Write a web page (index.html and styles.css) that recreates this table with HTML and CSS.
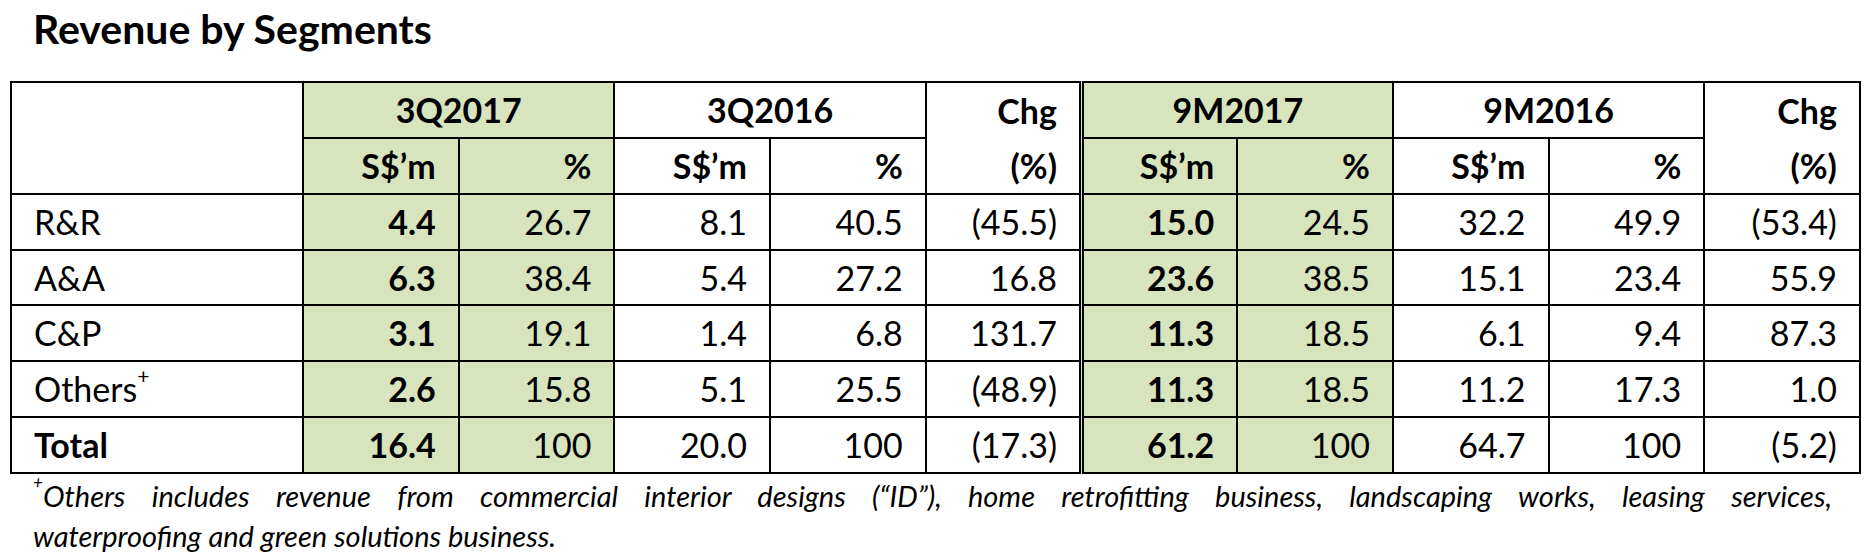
FILE: index.html
```html
<!DOCTYPE html>
<html lang="en">
<head>
<meta charset="utf-8">
<title>Revenue by Segments</title>
<link rel="stylesheet" href="styles.css">
</head>
<body>
<div class="page">
  <h1 class="title">Revenue by Segments</h1>
  <table class="rev">
    <colgroup>
      <col class="c-label">
      <col class="c-num"><col class="c-num"><col class="c-num"><col class="c-num"><col class="c-num">
      <col class="c-num"><col class="c-num"><col class="c-num"><col class="c-num"><col class="c-num">
    </colgroup>
    <thead>
      <tr class="hrow">
        <th rowspan="2" class="blank"></th>
        <th colspan="2" class="grp hl">3Q2017</th>
        <th colspan="2" class="grp">3Q2016</th>
        <th rowspan="2" class="chg"><span class="chg-line">Chg</span><span class="chg-line">(%)</span></th>
        <th colspan="2" class="grp hl dbl">9M2017</th>
        <th colspan="2" class="grp">9M2016</th>
        <th rowspan="2" class="chg"><span class="chg-line">Chg</span><span class="chg-line">(%)</span></th>
      </tr>
      <tr class="hrow">
        <th class="hl">S$’m</th><th class="hl">%</th>
        <th>S$’m</th><th>%</th>
        <th class="hl dbl">S$’m</th><th class="hl">%</th>
        <th>S$’m</th><th>%</th>
      </tr>
    </thead>
    <tbody>
      <tr>
        <td class="lbl">R&amp;R</td>
        <td class="hl b">4.4</td><td class="hl">26.7</td>
        <td>8.1</td><td>40.5</td><td>(45.5)</td>
        <td class="hl b dbl">15.0</td><td class="hl">24.5</td>
        <td>32.2</td><td>49.9</td><td>(53.4)</td>
      </tr>
      <tr>
        <td class="lbl">A&amp;A</td>
        <td class="hl b">6.3</td><td class="hl">38.4</td>
        <td>5.4</td><td>27.2</td><td>16.8</td>
        <td class="hl b dbl">23.6</td><td class="hl">38.5</td>
        <td>15.1</td><td>23.4</td><td>55.9</td>
      </tr>
      <tr>
        <td class="lbl">C&amp;P</td>
        <td class="hl b">3.1</td><td class="hl">19.1</td>
        <td>1.4</td><td>6.8</td><td>131.7</td>
        <td class="hl b dbl">11.3</td><td class="hl">18.5</td>
        <td>6.1</td><td>9.4</td><td>87.3</td>
      </tr>
      <tr>
        <td class="lbl">Others<sup class="plus">+</sup></td>
        <td class="hl b">2.6</td><td class="hl">15.8</td>
        <td>5.1</td><td>25.5</td><td>(48.9)</td>
        <td class="hl b dbl">11.3</td><td class="hl">18.5</td>
        <td>11.2</td><td>17.3</td><td>1.0</td>
      </tr>
      <tr>
        <td class="lbl b">Total</td>
        <td class="hl b">16.4</td><td class="hl">100</td>
        <td>20.0</td><td>100</td><td>(17.3)</td>
        <td class="hl b dbl">61.2</td><td class="hl">100</td>
        <td>64.7</td><td>100</td><td>(5.2)</td>
      </tr>
    </tbody>
  </table>
  <div class="note">
    <span class="note-line1"><sup class="plus-note">+</sup>Others includes revenue from commercial interior designs (“ID”), home retrofitting business, landscaping works, leasing services,</span>
    <span class="note-line2">waterproofing and green solutions business.</span>
  </div>
</div>
</body>
</html>
```

FILE: styles.css
```css
html, body {
  margin: 0;
  padding: 0;
  background: #ffffff;
}

body {
  font-family: Lato, "Open Sans", "DejaVu Sans", sans-serif;
  color: #000000;
}

.page {
  padding: 0 16px 0 10px;
}

.title {
  margin: 0;
  padding: 8px 0 0 23px;
  height: 81px;
  box-sizing: border-box;
  font-size: 41px;
  font-weight: 700;
  line-height: 42px;
}

.rev {
  border-collapse: collapse;
  table-layout: fixed;
  width: 1849px;
  font-size: 34px;
}

.c-label { width: 292px; }
.c-num { width: 155.7px; }

.rev th,
.rev td {
  border: 2px solid #000000;
  height: 55.71px;
  padding: 0 22px 0 22px;
  text-align: right;
  vertical-align: middle;
  line-height: 38px;
  white-space: nowrap;
  box-sizing: border-box;
}

.rev .hrow th {
  height: 56px;
}

.rev th {
  font-weight: 700;
}

.rev th.grp {
  text-align: center;
  padding: 0;
}

.rev th.chg {
  line-height: 38px;
}

.chg-line {
  display: block;
}

.chg-line + .chg-line {
  margin-top: 17px;
}

.rev .hl {
  background: #d7e4bd;
}

.rev .dbl {
  border-left: 5px double #000000;
}

.rev td.lbl {
  text-align: left;
  padding-left: 22px;
}

.rev .b {
  font-weight: 700;
}

.plus {
  font-size: 21px;
  vertical-align: top;
  position: relative;
  top: -5px;
  line-height: 1;
}

.note {
  padding: 2px 27px 0 23px;
  font-size: 29px;
  font-style: italic;
  line-height: 40px;
}

.note-line1 {
  display: block;
  text-align: justify;
  text-align-last: justify;
}

.note-line2 {
  display: block;
}

.plus-note {
  font-size: 17px;
  vertical-align: top;
  position: relative;
  top: -3px;
  line-height: 1;
}
```
